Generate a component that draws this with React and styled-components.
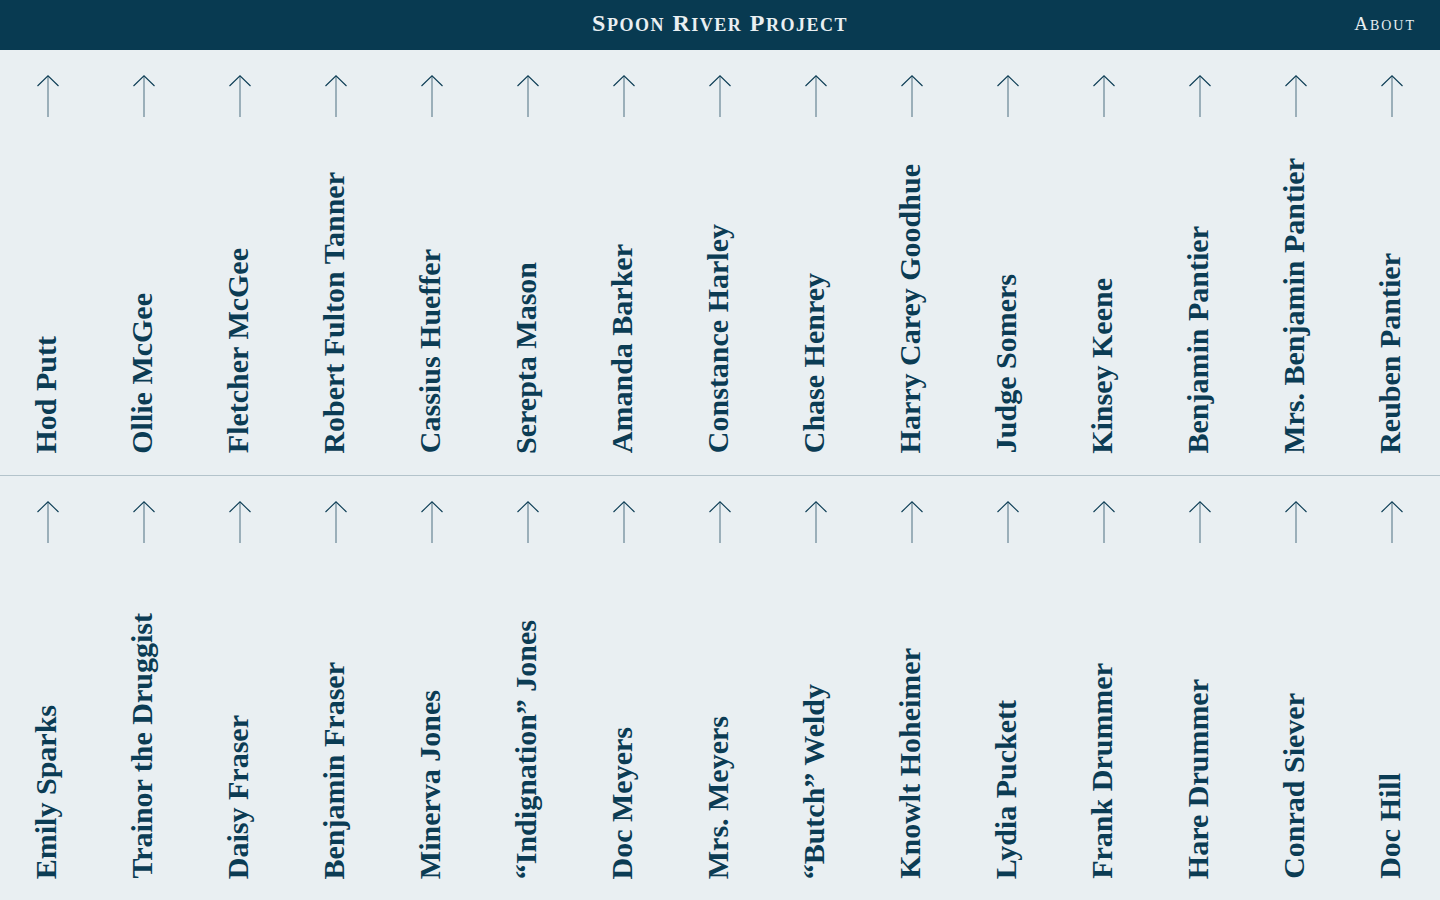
import React from "react";
import styled, { createGlobalStyle } from "styled-components";

const rows = [
  [
    "Hod Putt", "Ollie McGee", "Fletcher McGee", "Robert Fulton Tanner", "Cassius Hueffer",
    "Serepta Mason", "Amanda Barker", "Constance Harley", "Chase Henrey", "Harry Carey Goodhue",
    "Judge Somers", "Kinsey Keene", "Benjamin Pantier", "Mrs. Benjamin Pantier", "Reuben Pantier",
  ],
  [
    "Emily Sparks", "Trainor the Druggist", "Daisy Fraser", "Benjamin Fraser", "Minerva Jones",
    "\u201CIndignation\u201D Jones", "Doc Meyers", "Mrs. Meyers", "\u201CButch\u201D Weldy", "Knowlt Hoheimer",
    "Lydia Puckett", "Frank Drummer", "Hare Drummer", "Conrad Siever", "Doc Hill",
  ],
];

const ink = "#0b3c54";

const Global = createGlobalStyle`
  html, body { margin: 0; padding: 0; }
  body {
    background: #e9eff2;
    font-family: "Liberation Serif", "Times New Roman", serif;
  }
`;

const Page = styled.div`
  height: 100vh;
  display: flex;
  flex-direction: column;
  overflow: hidden;
`;

const Header = styled.header`
  height: 50px;
  flex: none;
  box-sizing: border-box;
  background: #083a51;
  color: #e9eff2;
  display: grid;
  grid-template-columns: 1fr auto 1fr;
  align-items: center;
  padding: 0 24px 3px;
`;

const Title = styled.div`
  grid-column: 2;
  font-size: 24px;
  font-weight: 700;
  letter-spacing: 1.5px;
  text-transform: uppercase;
`;

const NavLink = styled.a`
  justify-self: end;
  font-size: 19px;
  letter-spacing: 2px;
  text-transform: uppercase;
  color: inherit;
  text-decoration: none;
`;

// lowercase part of a small-caps word
const Small = styled.span`
  font-size: ${(p) => p.$size}px;
`;

const Row = styled.section`
  flex: 1;
  display: grid;
  grid-template-columns: repeat(15, 1fr);
  border-top: ${(p) => (p.$divided ? "1px solid #b3c3cb" : "none")};
`;

const Column = styled.div`
  display: flex;
  flex-direction: column;
  align-items: center;
  padding: 25px 0 21px;
  min-height: 0;
`;

const Name = styled.div`
  margin-top: auto;
  writing-mode: vertical-rl;
  transform: rotate(180deg) translateX(2px);
  font-size: 30px;
  font-weight: 700;
  line-height: 1;
  color: ${ink};
  white-space: nowrap;
`;

const Arrow = () => (
  <svg width="24" height="43" viewBox="0 0 24 43" style={{ display: "block" }}>
    <line x1="12" y1="1" x2="12" y2="42" stroke={ink} strokeOpacity="0.5" strokeWidth="1.4" />
    <polyline points="1.5,11 12,0.8 22.5,11" fill="none" stroke={ink} strokeWidth="1.1" />
  </svg>
);

const smallCaps = (text, size) =>
  text.split(" ").map((w, i) => (
    <React.Fragment key={i}>
      {i > 0 && " "}
      {w[0]}
      <Small $size={size}>{w.slice(1)}</Small>
    </React.Fragment>
  ));

export default function App() {
  return (
    <Page>
      <Global />
      <Header>
        <Title>{smallCaps("Spoon River Project", 18)}</Title>
        <NavLink href="#">{smallCaps("About", 14)}</NavLink>
      </Header>
      {rows.map((names, r) => (
        <Row key={r} $divided={r > 0}>
          {names.map((n) => (
            <Column key={n}>
              <Arrow />
              <Name>{n}</Name>
            </Column>
          ))}
        </Row>
      ))}
    </Page>
  );
}
